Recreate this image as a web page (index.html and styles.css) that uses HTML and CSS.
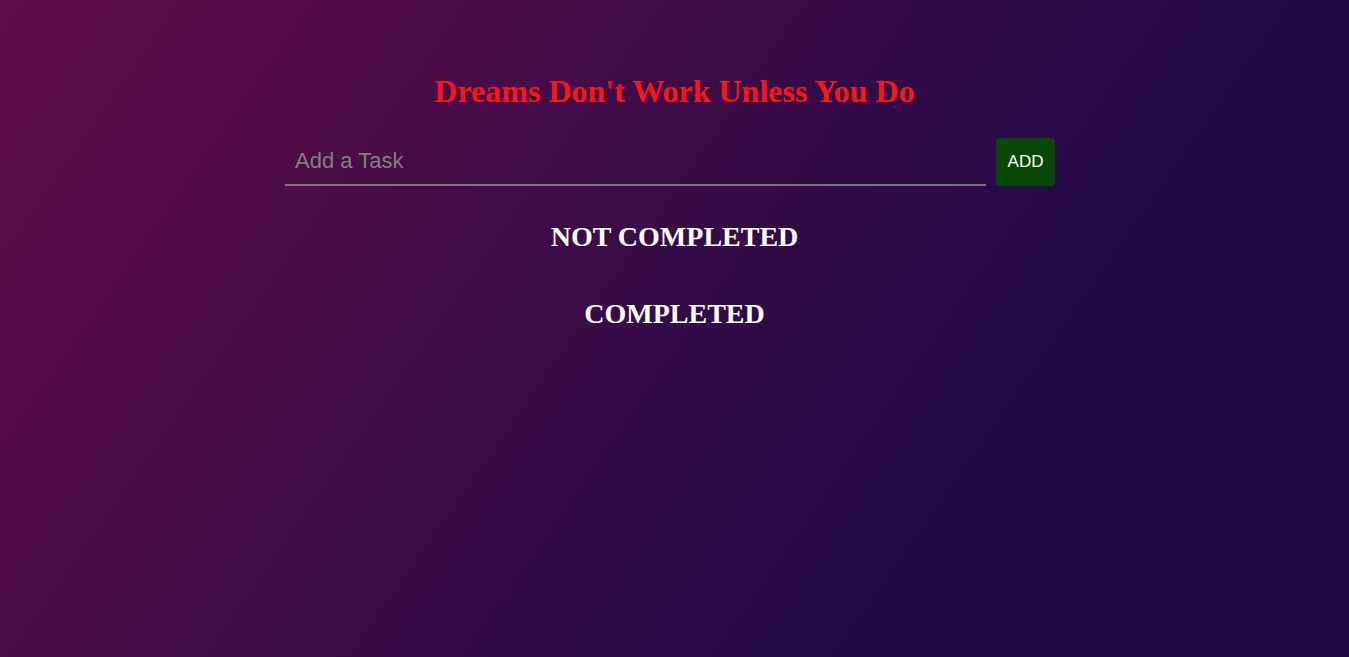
FILE: index.html
```html
<!DOCTYPE html>
<html>
<head>
<meta charset="utf-8">
<link rel="stylesheet" href="styles.css">
</head>
<body>
<div class="app">
  <h1 class="title">Dreams Don't Work Unless You Do</h1>
  <form class="form">
    <input class="task-input" type="text" placeholder="Add a Task">
    <button class="add-btn" type="button">ADD</button>
  </form>
  <h2 class="section">NOT COMPLETED</h2>
  <h2 class="section">COMPLETED</h2>
</div>
</body>
</html>
```
FILE: styles.css
```css
html, body {
  margin: 0;
  height: 100%;
}
body {
  background: linear-gradient(125deg, #600c48 0%, #3e0c48 40%, #200a46 72%, #200a46 100%);
  font-family: "Liberation Serif", serif;
}
.app {
  display: flex;
  flex-direction: column;
  align-items: center;
  padding-top: 73px;
}
.title {
  margin: 0;
  color: #fa1616;
  font-size: 32px;
  font-weight: bold;
  line-height: 36px;
}
.form {
  display: flex;
  align-items: flex-end;
  gap: 10px;
  margin-top: 29px;
  margin-left: -9px;
}
.task-input {
  width: 701px;
  height: 48px;
  box-sizing: border-box;
  background: transparent;
  border: none;
  border-bottom: 2px solid #787878;
  outline: none;
  padding: 0 10px;
  font-family: "Liberation Sans", sans-serif;
  font-size: 22px;
  color: #fff;
}
.task-input::placeholder {
  color: #7f7f7f;
}
.add-btn {
  width: 59px;
  height: 48px;
  background: #0a480a;
  border: none;
  border-radius: 4px;
  color: #fff;
  font-family: "Liberation Sans", sans-serif;
  font-size: 17px;
  padding: 0;
}
.section {
  margin: 35px 0 0;
  color: #fff;
  font-size: 28px;
  font-weight: bold;
  line-height: 32px;
}
.section + .section {
  margin-top: 45px;
}
```
